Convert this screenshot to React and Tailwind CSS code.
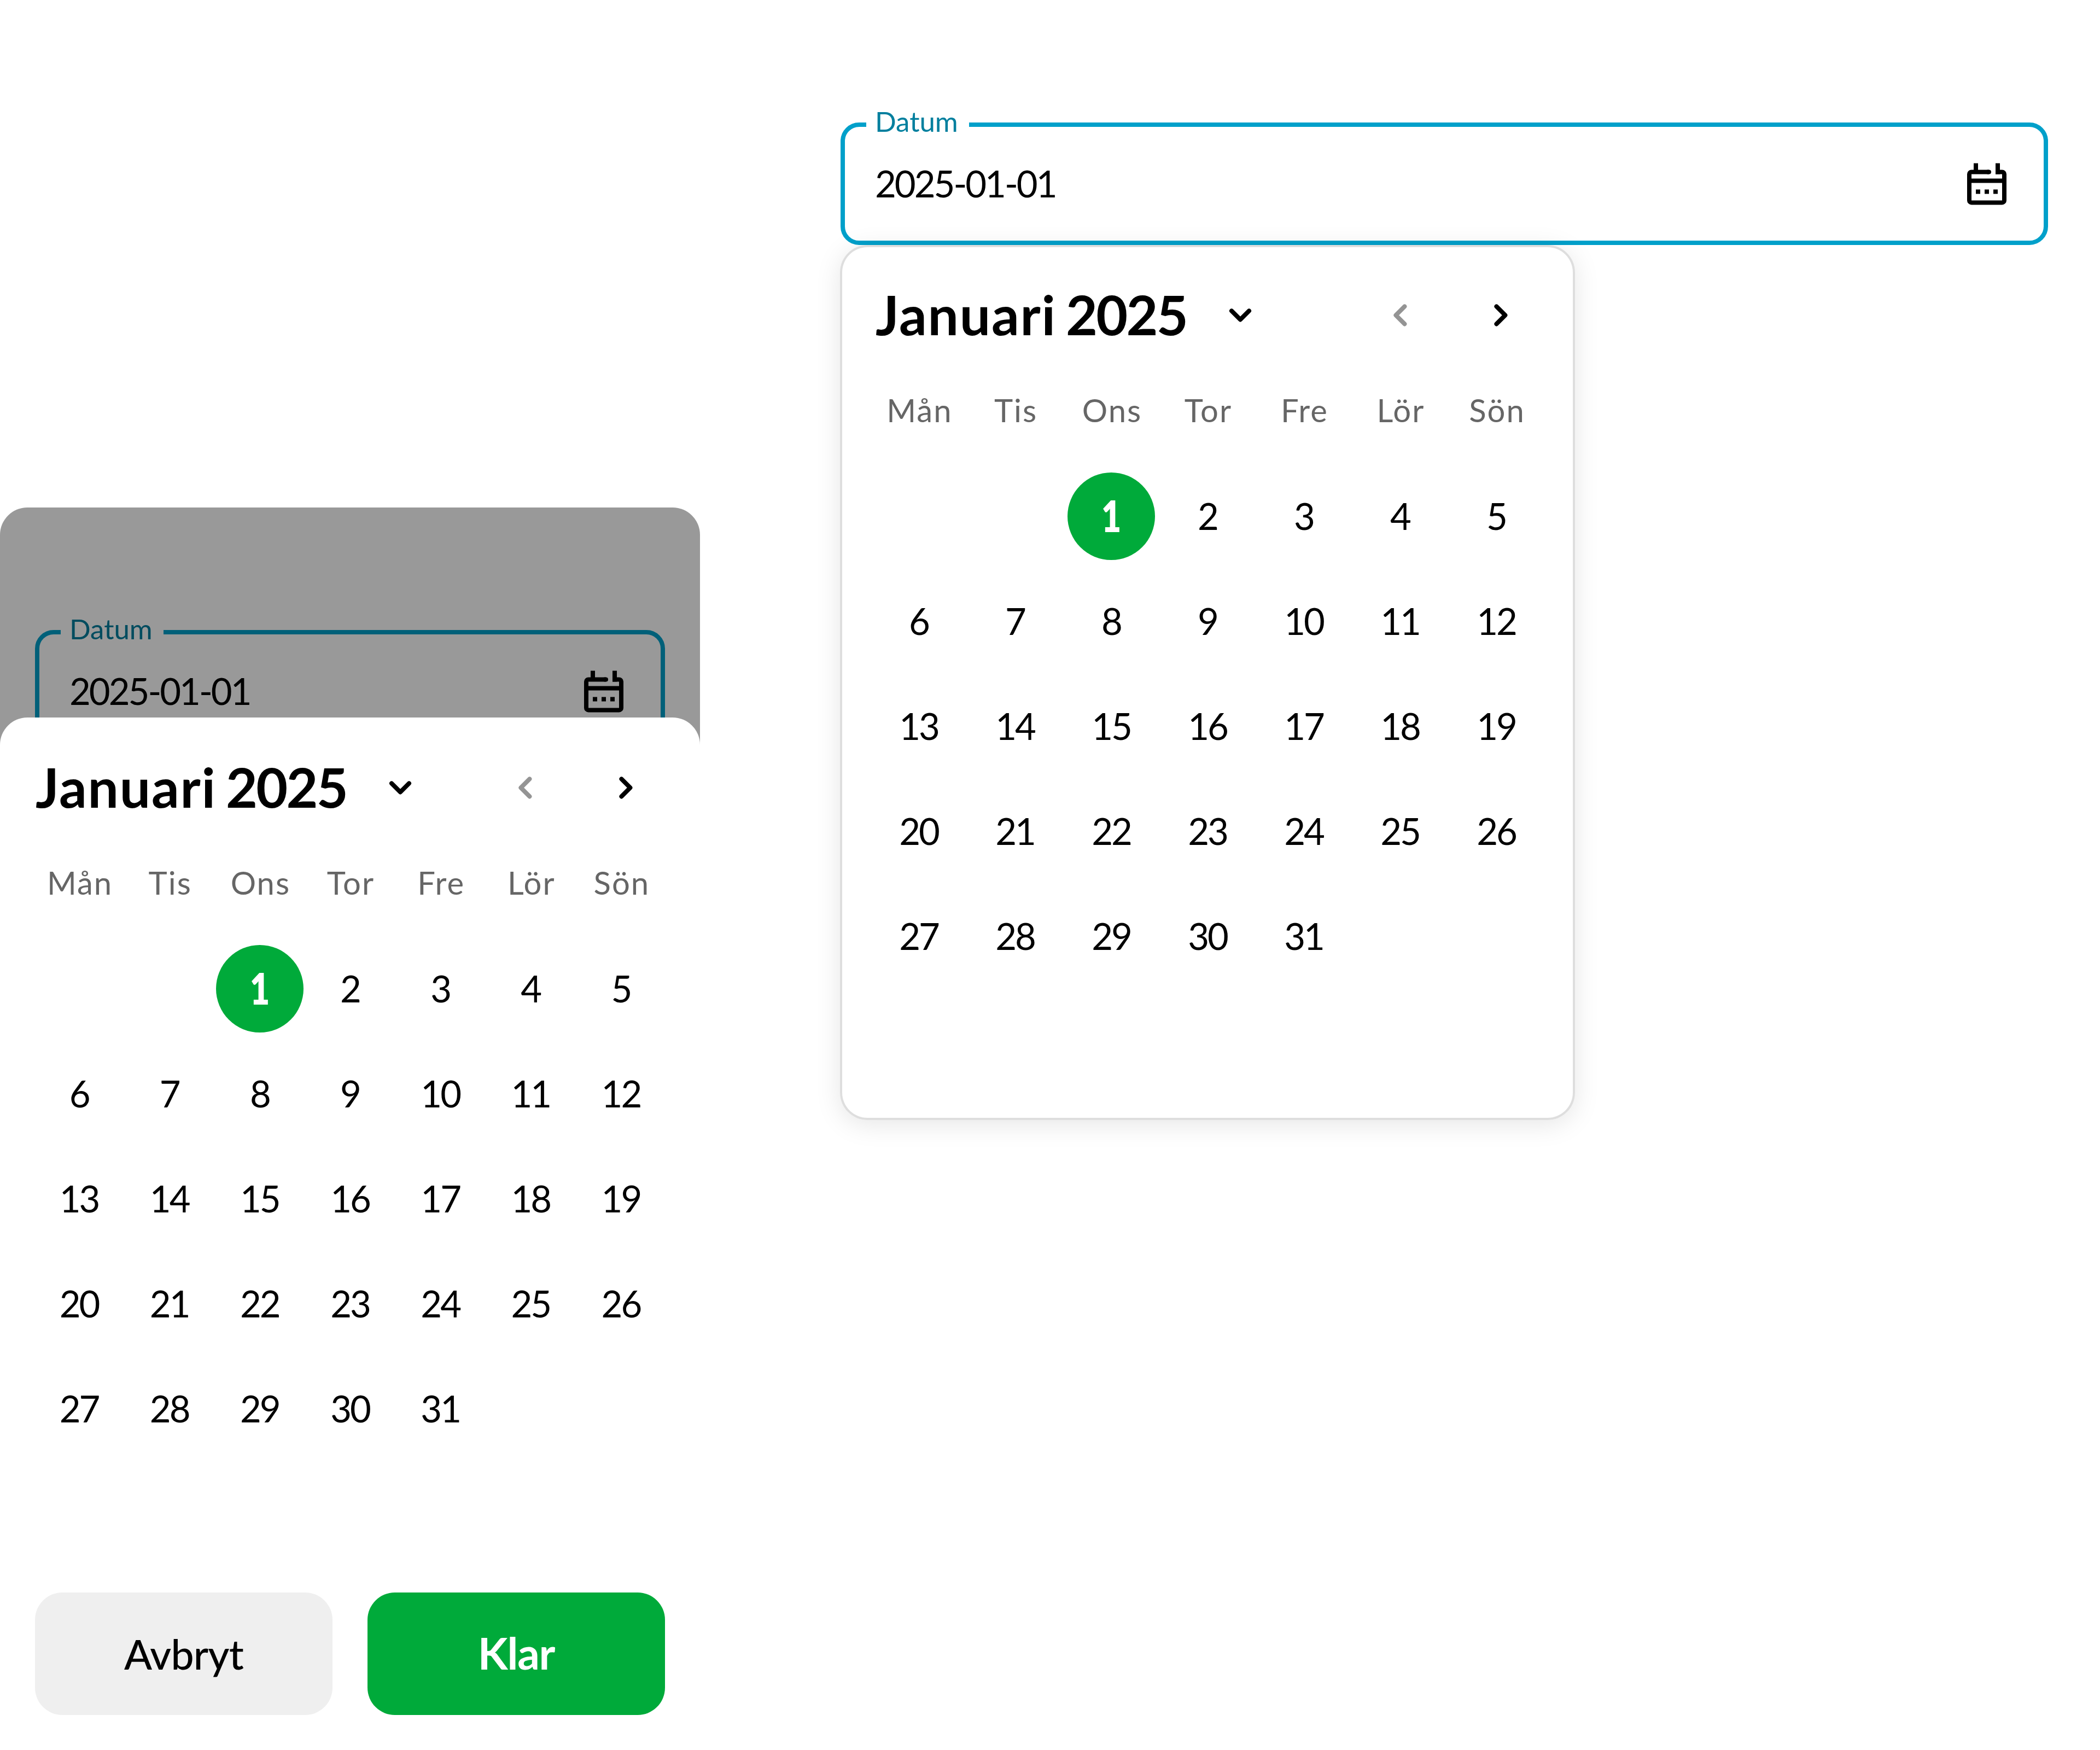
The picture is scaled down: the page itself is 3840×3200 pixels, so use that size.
import React from 'react';

const WEEKDAYS = ['Mån', 'Tis', 'Ons', 'Tor', 'Fre', 'Lör', 'Sön'];
const DAYS = Array.from({ length: 31 }, (_, i) => i + 1);
// January 2025 starts on a Wednesday
const LEADING_BLANKS = [0, 1];
const SELECTED_DAY = 1;

const CalendarIcon = () => (
  <svg
    viewBox="0 0 24 24"
    className="w-24 h-24 shrink-0"
    fill="none"
    stroke="currentColor"
    strokeWidth="2"
  >
    <g transform="translate(0 0.6)">
      <path d="M13 6H5a1 1 0 0 0-1 1v12a1 1 0 0 0 1 1h14a1 1 0 0 0 1-1V7a1 1 0 0 0-1-1h-3" />
      <path d="M12.5 6h.5" strokeLinecap="round" />
      <path d="M7 2v4M17 2v5M4 10h16" />
      <path d="M7 15h2M11 15h2M15 15h2" />
    </g>
  </svg>
);

const Chevron = ({ d, className }) => (
  <svg
    viewBox="0 0 24 24"
    className={className}
    fill="none"
    stroke="currentColor"
    strokeWidth="2"
    strokeLinecap="round"
    strokeLinejoin="round"
  >
    <path d={d} />
  </svg>
);

const DateField = () => (
  <div className="relative flex items-center justify-between h-56 border-8 border-[#00a0ca] rounded-[34px] pl-[55px] pr-14">
    <span className="absolute left-[39px] -top-9 w-[188px] h-14 pl-4 bg-white text-[#007f9e] text-[51px] leading-[51px]">
      Datum
    </span>
    <span className="text-[67px] leading-none tracking-[-0.045em] -mt-0.5">2025-01-01</span>
    <CalendarIcon />
  </div>
);

const CalendarHeader = () => (
  <div className="flex items-center h-24 pl-[65px] pr-[88px]">
    <h2 className="text-[100px] leading-none font-bold whitespace-nowrap w-[619px] -mt-1">
      <span className="tracking-[0.018em]">Januari</span>{' '}
      <span className="tracking-[-0.028em] -ml-[7px]">2025</span>
    </h2>
    <Chevron d="M8 10.1l4 4 4-4" className="w-24 h-24" />
    <div className="flex gap-22 ml-auto">
      <Chevron d="M14.1 8.1l-4 4 4 4" className="w-24 h-24 text-[#949494]" />
      <Chevron d="M10.1 8.1l4 4-4 4" className="w-24 h-24" />
    </div>
  </div>
);

const DayGrid = ({ className }) => (
  <div className={`grid grid-cols-7 pt-12 ${className}`}>
    {WEEKDAYS.map((day) => (
      <div key={day} className="flex items-center justify-center h-[156px] mb-5 pl-[3px] text-[58px] leading-none tracking-[0.035em] text-[#666666]">
        {day}
      </div>
    ))}
    {LEADING_BLANKS.map((n) => <div key={n} className="h-48" />)}
    {DAYS.map((day) => (
      <div key={day} className="flex items-center justify-center h-48">
        {day === SELECTED_DAY ? (
          <div className="flex items-center justify-center size-40 rounded-full bg-[#00aa3a] text-white text-[80px] leading-none font-extrabold">
            <span className="scale-x-[0.78] -mt-1">{day}</span>
          </div>
        ) : (
          <span className="text-[67px] leading-none tracking-[-0.045em] -mt-0.5">{day}</span>
        )}
      </div>
    ))}
  </div>
);

const MobilePicker = () => (
  <div className="flex flex-col w-[1280px] h-[2272px] mt-[928px] rounded-t-[50px] bg-white overflow-hidden shrink-0">
    <div className="relative h-[434px] shrink-0">
      <div className="px-16 pt-56">
        <DateField />
      </div>
      <div className="absolute inset-0 bg-black/40" />
    </div>
    {/* bottom sheet, overlaps the dimmed page so its corners show the backdrop */}
    <div className="relative h-[1888px] -mt-[50px] rounded-t-[50px] bg-white pt-20 shrink-0">
      <CalendarHeader />
      <DayGrid className="px-[62px]" />
      <div className="flex gap-16 px-16 mt-60">
        <button className="flex items-center justify-center w-[544px] h-56 rounded-[50px] bg-[#efefef] text-[75px] leading-none font-medium tracking-[-0.01em]">
          Avbryt
        </button>
        <button className="flex items-center justify-center w-[544px] h-56 rounded-[50px] bg-[#00aa3a] text-white text-[80px] leading-none font-bold tracking-[-0.015em] pb-1">
          Klar
        </button>
      </div>
    </div>
  </div>
);

const DesktopPicker = () => (
  <div className="w-[2208px] ml-[257px] pt-56">
    <DateField />
    <div className="relative w-[1344px] h-[1600px] -ml-px pt-20 rounded-[50px] bg-white shadow-[0_8px_48px_rgba(0,0,0,0.1),inset_0_0_0_4px_#dedede]">
      <CalendarHeader />
      <DayGrid className="px-14" />
    </div>
  </div>
);

const App = () => {
  return (
    <div className="flex items-start w-[3840px] h-[3200px] overflow-hidden bg-white text-black font-['Lato',sans-serif]">
      <MobilePicker />
      <DesktopPicker />
    </div>
  );
};

export default App;
